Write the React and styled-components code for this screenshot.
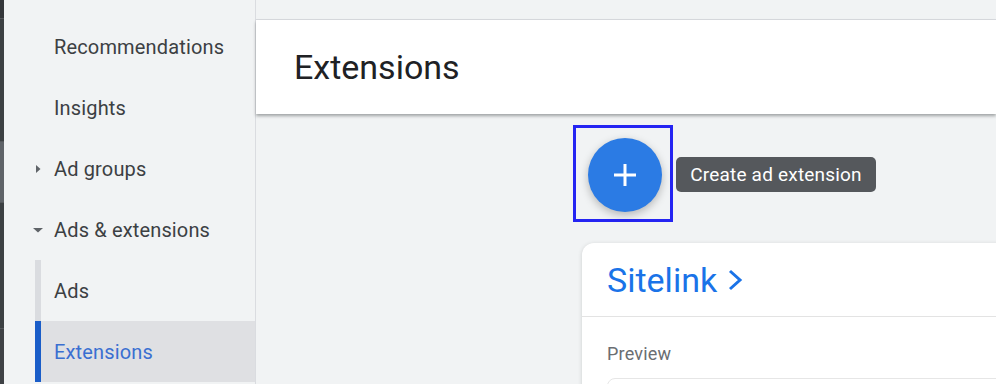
import React from "react";
import styled, { createGlobalStyle } from "styled-components";

const navItems = [
  { label: "Recommendations" },
  { label: "Insights" },
  { label: "Ad groups", arrow: "right" },
  { label: "Ads & extensions", arrow: "down" },
];

const subItems = [
  { label: "Ads" },
  { label: "Extensions", active: true },
];

const App = () => {
  return (
    <Page>
      <GlobalStyle />
      <RailStrip>
        <RailSegment $h={18} $tone="#34373a" />
        <RailSegment $h={122} $tone="#3c4043" />
        <RailSegment $h={60} $tone="#5f6368" />
        <RailSegment $h={125} $tone="#3c4043" />
        <RailSegment $h={59} $tone="#3f4245" />
      </RailStrip>
      <Sidebar>
        {navItems.map((item) => (
          <NavItem key={item.label}>
            <Caret>
              {item.arrow === "right" && (
                <svg width="12" height="12" viewBox="0 0 12 12">
                  <path d="M4 2 L8.5 6 L4 10 Z" fill="#5f6368" />
                </svg>
              )}
              {item.arrow === "down" && (
                <svg width="12" height="12" viewBox="0 0 12 12">
                  <path d="M1 4 L11 4 L6 8.5 Z" fill="#5f6368" />
                </svg>
              )}
            </Caret>
            {item.label}
          </NavItem>
        ))}
        {subItems.map((item) => (
          <SubItem key={item.label} $active={item.active}>
            {item.label}
          </SubItem>
        ))}
      </Sidebar>
      <Main>
        <TopGap />
        <Header>
          <Title>Extensions</Title>
        </Header>
        <Content>
          <FabRow>
            <Highlight>
              <Fab>
                <svg width="26" height="26" viewBox="0 0 26 26">
                  <path d="M13 2 V24 M2 13 H24" stroke="#fff" strokeWidth="3" />
                </svg>
              </Fab>
            </Highlight>
            <Tooltip>Create ad extension</Tooltip>
          </FabRow>
          <Card>
            <CardHead>
              <CardTitle>
                Sitelink
                <svg width="20" height="24" viewBox="0 0 20 24">
                  <path
                    d="M5 3 L15 12 L5 21"
                    fill="none"
                    stroke="#1a73e8"
                    strokeWidth="3"
                  />
                </svg>
              </CardTitle>
            </CardHead>
            <CardBody>
              <Label>Preview</Label>
              <PreviewBox />
            </CardBody>
          </Card>
        </Content>
      </Main>
    </Page>
  );
};
export default App;

const GlobalStyle = createGlobalStyle`
  body {
    margin: 0;
    background: #f1f3f4;
    font-family: Roboto, "Noto Sans", Arial, sans-serif;
  }
`;

const Page = styled.div`
  display: flex;
  width: 996px;
  height: 384px;
  overflow: hidden;
  background: #f1f3f4;
`;

const RailStrip = styled.div`
  display: flex;
  flex-direction: column;
  width: 4px;
  flex-shrink: 0;
`;

const RailSegment = styled.div`
  height: ${(p) => p.$h}px;
  flex-shrink: 0;
  background: ${(p) => p.$tone};
  border-bottom: 1px solid #55585b;
`;

const Sidebar = styled.nav`
  width: 251px;
  flex-shrink: 0;
  padding-top: 16px;
  background: #f1f3f4;
  border-right: 1px solid #dadce0;
  display: flex;
  flex-direction: column;
`;

const NavItem = styled.div`
  height: 61px;
  flex-shrink: 0;
  display: flex;
  align-items: center;
  font-size: 20px;
  letter-spacing: 0.15px;
  color: #3c4043;
`;

const Caret = styled.span`
  width: 50px;
  display: flex;
  justify-content: flex-end;
  padding-right: 10px;
  box-sizing: border-box;
`;

const SubItem = styled.div`
  height: 61px;
  flex-shrink: 0;
  margin-left: 31px;
  padding-left: 13px;
  display: flex;
  align-items: center;
  font-size: 20px;
  letter-spacing: 0.15px;
  border-left: 6px solid ${(p) => (p.$active ? "#1a5dc8" : "#dadce0")};
  background: ${(p) => (p.$active ? "#dfe0e3" : "transparent")};
  color: ${(p) => (p.$active ? "#3a6fd1" : "#3c4043")};
`;

const Main = styled.main`
  flex: 1;
  display: flex;
  flex-direction: column;
  min-width: 0;
`;

const TopGap = styled.div`
  height: 19px;
  flex-shrink: 0;
  border-bottom: 1px solid #dadce0;
`;

const Header = styled.header`
  height: 94px;
  flex-shrink: 0;
  background: #fff;
  display: flex;
  align-items: center;
  padding-left: 38px;
  box-shadow: 0 2px 3px rgba(60, 64, 67, 0.45);
  position: relative;
  z-index: 1;
`;

const Title = styled.h1`
  margin: 0;
  font-weight: 400;
  font-size: 34px;
  color: #202124;
`;

const Content = styled.div`
  flex-shrink: 0;
  padding-left: 317px;
  padding-top: 11px;
`;

const FabRow = styled.div`
  position: relative;
  width: 100px;
`;

const Highlight = styled.div`
  border: 3px solid #2424f2;
  padding: 10px 0 0 12px;
  width: 82px;
  height: 81px;
`;

const Fab = styled.div`
  width: 74px;
  height: 74px;
  border-radius: 50%;
  background: #2b7be4;
  display: flex;
  align-items: center;
  justify-content: center;
  box-shadow: 0 3px 8px rgba(0, 0, 0, 0.25);
`;

const Tooltip = styled.div`
  position: absolute;
  left: 103px;
  top: 32px;
  width: 200px;
  height: 35px;
  border-radius: 5px;
  background: #55585c;
  color: #fff;
  font-size: 19px;
  display: flex;
  align-items: center;
  justify-content: center;
  letter-spacing: 0.2px;
`;

const Card = styled.section`
  margin-top: 21px;
  margin-left: 9px;
  width: 520px;
  background: #fff;
  border-radius: 12px;
  box-shadow: 0 1px 4px rgba(60, 64, 67, 0.2);
`;

const CardHead = styled.div`
  height: 73px;
  display: flex;
  align-items: center;
  padding-left: 25px;
  border-bottom: 1px solid #e3e3e3;
`;

const CardTitle = styled.div`
  display: flex;
  align-items: center;
  gap: 8px;
  font-size: 34px;
  color: #1a73e8;
`;

const CardBody = styled.div`
  padding: 26px 25px 0;
`;

const Label = styled.div`
  font-size: 18px;
  color: #6a6e72;
  letter-spacing: 0.2px;
`;

const PreviewBox = styled.div`
  margin-top: 14px;
  height: 40px;
  border: 1px solid #e6e6e6;
  border-radius: 8px;
`;
